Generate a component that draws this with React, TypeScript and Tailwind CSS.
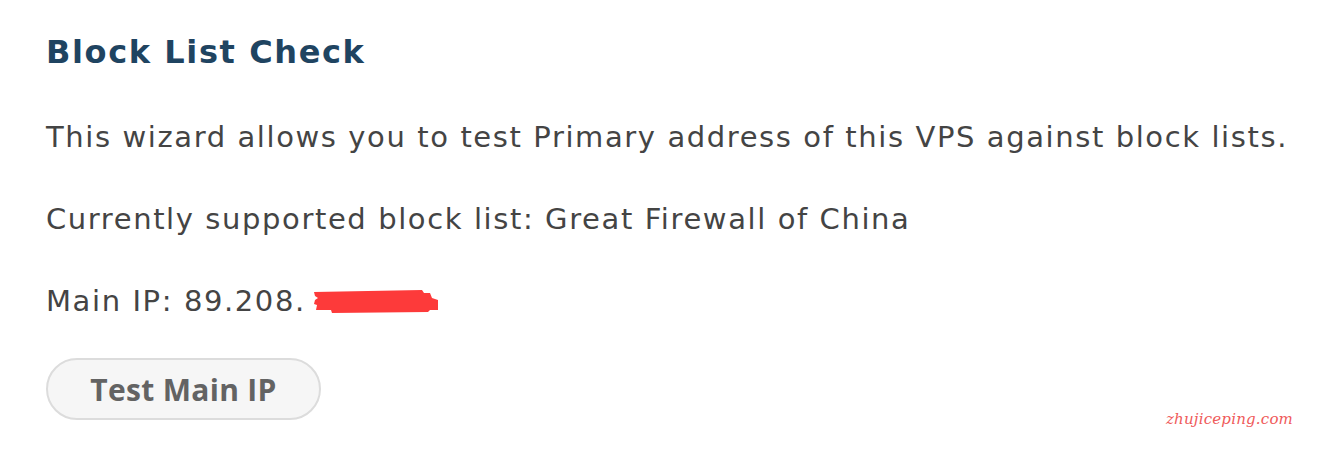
import React from 'react';

const body = "font-['DejaVu_Sans',Verdana,sans-serif]";

function Redaction() {
  return (
    <svg width="128" height="26" viewBox="0 0 128 26" className="inline-block ml-[6px]">
      <path
        d="M2 4 L110 2 L112 5 L118 5 L120 10 L126 12 L126 22 L118 22 L116 24 L20 25 L19 22 L4 22 L5 17 L2 16 L3 12 L6 10 L3 8 Z"
        fill="#fd3a3a"
      />
    </svg>
  );
}

export default function App() {
  return (
    <div className="w-[1320px] h-[452px] bg-white relative overflow-hidden">
      <div className="pl-[46px] pt-[30px]">
        <h2 className="font-['DejaVu_Sans',Verdana,sans-serif] font-bold text-[32px] leading-[44px] tracking-[1.6px] text-[#1f4461]">
          Block List Check
        </h2>
        <div className={`${body} text-[29px] text-[#444] leading-[40px] tracking-[1.6px] mt-[43px] flex flex-col gap-[42px]`}>
          <p>This wizard allows you to test Primary address of this VPS against block lists.</p>
          <p>Currently supported block list: Great Firewall of China</p>
          <p className="flex items-center">
            Main IP: 89.208.
            <Redaction />
          </p>
        </div>
        <button className="mt-[37px] w-[275px] h-[62px] rounded-full border-2 border-[#dcdcdc] bg-[#f6f6f6] font-['Open_Sans',sans-serif] font-bold text-[30px] text-[#636363] tracking-[0.3px]">
          Test Main IP
        </button>
      </div>
      <div className="absolute left-[1166px] top-[408px] font-['DejaVu_Serif',serif] italic text-[15px] text-[#ef5a5a] tracking-[0.2px]">
        zhujiceping.com
      </div>
    </div>
  );
}
